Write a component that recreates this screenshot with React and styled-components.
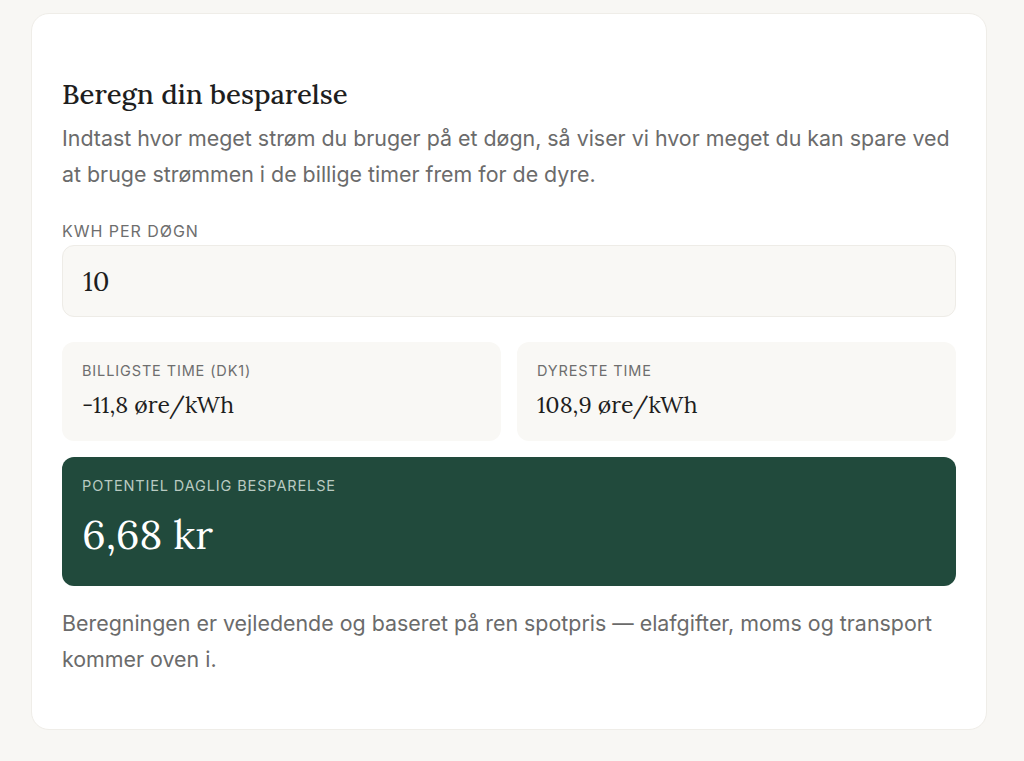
import React from 'react';
import styled, { createGlobalStyle } from 'styled-components';

const GlobalStyle = createGlobalStyle`
  html, body {
    margin: 0;
    padding: 0;
    background: #f8f7f4;
  }
  body {
    font-family: Inter, "Noto Sans", sans-serif;
    -webkit-font-smoothing: antialiased;
  }
`;

const serif = `Lora, "Liberation Serif", "DejaVu Serif", serif`;

const Page = styled.div`
  padding: 13px 37px 32px 31px;
`;

const Card = styled.section`
  background: #fff;
  border: 1px solid #efede8;
  border-radius: 18px;
  padding: 62px 30px 52px 30px;
`;

const Title = styled.h2`
  margin: 0;
  font-family: ${serif};
  font-weight: 500;
  font-size: 27.6px;
  line-height: 36px;
  color: #1e1e1e;
`;

const Lead = styled.p`
  margin: ${(p) => p.$top || 0}px 0 0;
  font-size: 21.4px;
  line-height: 36px;
  color: #6b6b6b;
`;

const Label = styled.div`
  font-size: ${(p) => p.$size || 14.5}px;
  line-height: 20px;
  letter-spacing: 0.06em;
  text-transform: uppercase;
  color: ${(p) => (p.$light ? '#b9cac1' : '#6e6e6e')};
`;

const Field = styled.label`
  display: flex;
  flex-direction: column;
  gap: 4px;
  margin-top: 29px;
`;

const Input = styled.input`
  box-sizing: border-box;
  width: 100%;
  height: 72px;
  padding: 0 20px;
  background: #f9f8f5;
  border: 1px solid #eeece7;
  border-radius: 12px;
  font-family: ${serif};
  font-size: 27px;
  color: #1e1e1e;
  outline: none;
`;

const Stats = styled.div`
  display: grid;
  grid-template-columns: 1fr 1fr;
  gap: 16px;
  margin-top: 25px;
`;

const Stat = styled.div`
  background: #f9f8f5;
  border-radius: 12px;
  padding: 19px 20px 22px;
  display: flex;
  flex-direction: column;
  gap: 10px;
`;

const Value = styled.div`
  font-family: ${serif};
  font-size: 23px;
  line-height: 28px;
  color: #1e1e1e;
`;

const Savings = styled.div`
  margin-top: 16px;
  background: #214a3c;
  border-radius: 12px;
  padding: 19px 20px 26px;
  display: flex;
  flex-direction: column;
  gap: 12px;
`;

const Big = styled.div`
  font-family: ${serif};
  font-size: 41px;
  line-height: 52px;
  color: #fff;
`;

export default function App() {
  return (
    <Page>
      <GlobalStyle />
      <Card>
        <Title>Beregn din besparelse</Title>
        <Lead $top={8}>
          Indtast hvor meget strøm du bruger på et døgn, så viser vi hvor meget du kan spare ved
          at bruge strømmen i de billige timer frem for de dyre.
        </Lead>

        <Field>
          <Label $size={16}>kWh per døgn</Label>
          <Input type="text" defaultValue="10" />
        </Field>

        <Stats>
          <Stat>
            <Label>Billigste time (DK1)</Label>
            <Value>-11,8 øre/kWh</Value>
          </Stat>
          <Stat>
            <Label>Dyreste time</Label>
            <Value>108,9 øre/kWh</Value>
          </Stat>
        </Stats>

        <Savings>
          <Label $light>Potentiel daglig besparelse</Label>
          <Big>6,68 kr</Big>
        </Savings>

        <Lead $top={19}>
          Beregningen er vejledende og baseret på ren spotpris — elafgifter, moms og transport
          kommer oven i.
        </Lead>
      </Card>
    </Page>
  );
}
